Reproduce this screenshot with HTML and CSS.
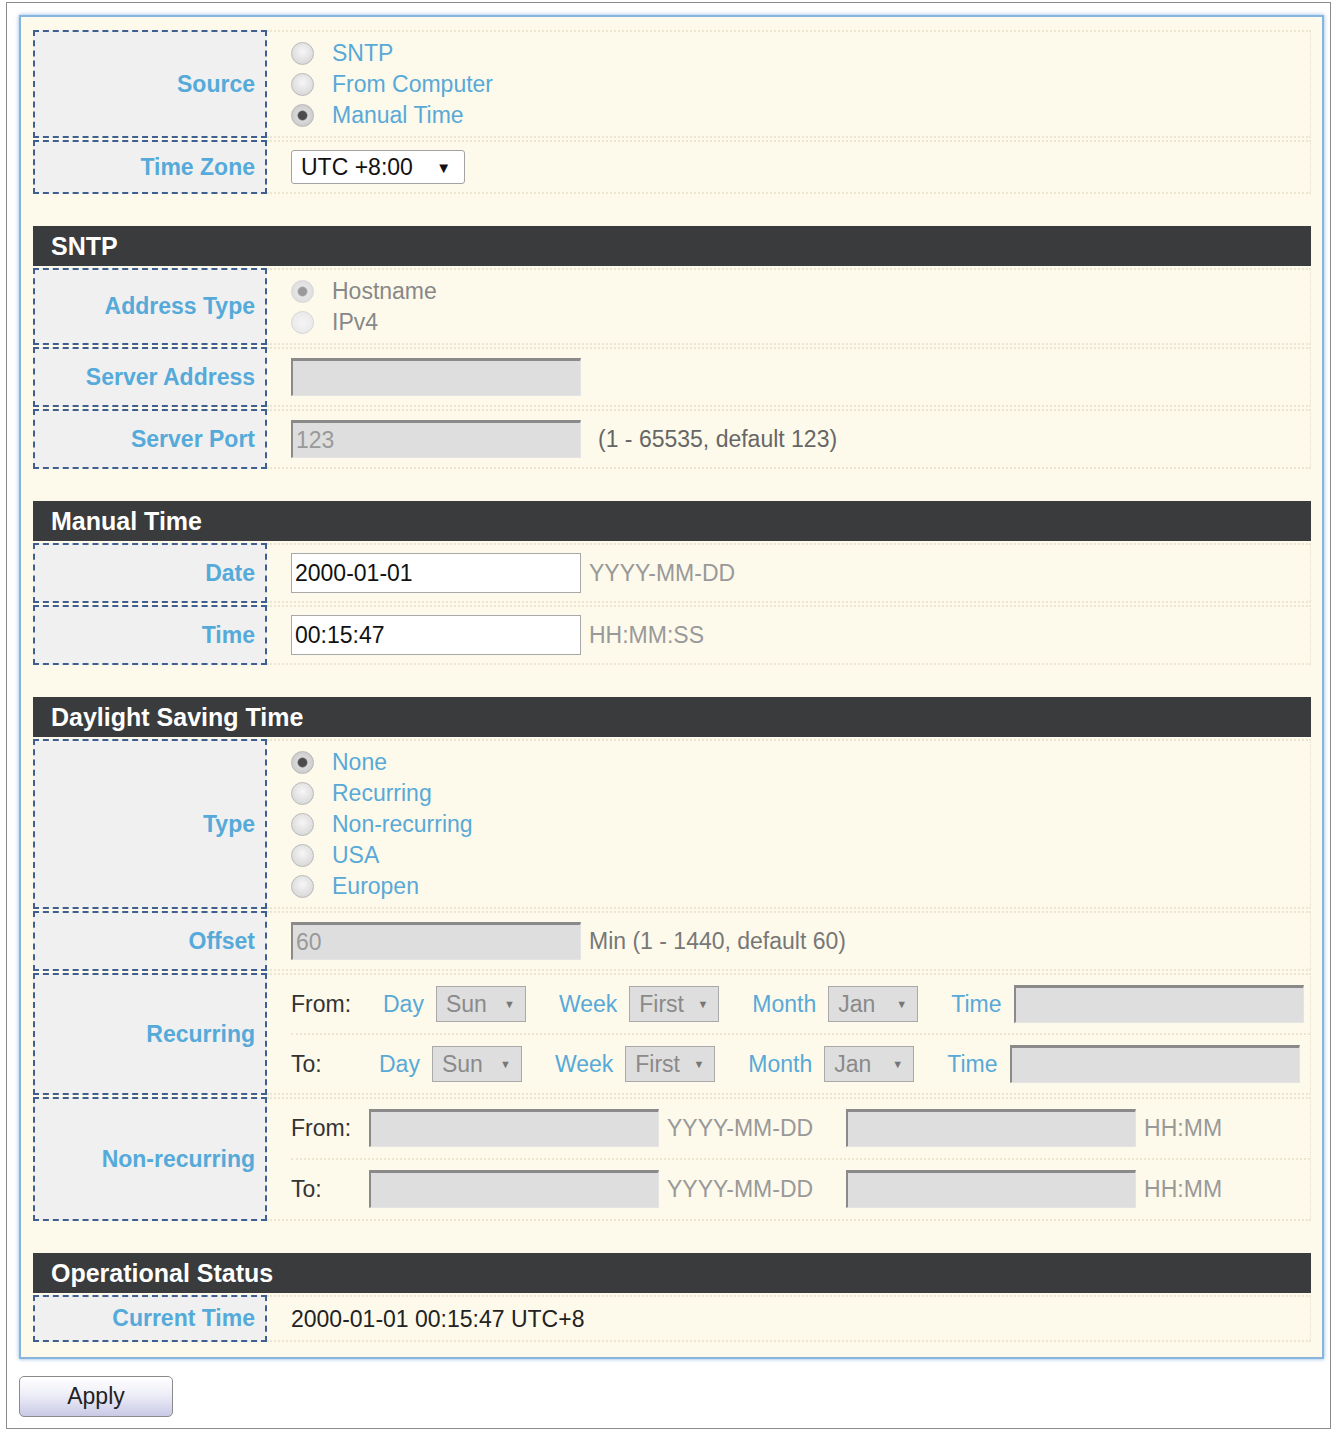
FILE: index.html
```html
<!DOCTYPE html>
<html lang="en">
<head>
    <meta charset="UTF-8">
    <meta name="viewport" content="width=device-width, initial-scale=1.0">
    <title>Time Settings</title>
    <link rel="stylesheet" href="styles.css">
</head>
<body>
  <div class="frame">
    <div class="panel">
        <!-- general -->
        <div class="section">
            <div class="row">
                <div class="label">Source</div>
                <div class="value list">
                    <label class="opt"><input type="radio" name="source"> SNTP</label>
                    <label class="opt"><input type="radio" name="source"> From Computer</label>
                    <label class="opt"><input type="radio" name="source" checked> Manual Time</label>
                </div>
            </div>
            <div class="row">
                <div class="label">Time Zone</div>
                <div class="value tz">
                    <span class="select">UTC +8:00<span class="arrow">&#9660;</span></span>
                </div>
            </div>
        </div>

        <div class="section">
            <div class="section-title">SNTP</div>
            <div class="row">
                <div class="label">Address Type</div>
                <div class="value list">
                    <label class="opt off"><input type="radio" name="addr" checked disabled> Hostname</label>
                    <label class="opt off"><input type="radio" name="addr" disabled> IPv4</label>
                </div>
            </div>
            <div class="row">
                <div class="label">Server Address</div>
                <div class="value">
                    <input type="text" class="field" disabled>
                </div>
            </div>
            <div class="row">
                <div class="label">Server Port</div>
                <div class="value">
                    <input type="text" class="field" value="123" disabled>
                    <span class="note dark wide">(1 - 65535, default 123)</span>
                </div>
            </div>
        </div>

        <div class="section">
            <div class="section-title">Manual Time</div>
            <div class="row">
                <div class="label">Date</div>
                <div class="value">
                    <input type="text" class="field on" value="2000-01-01">
                    <span class="note">YYYY-MM-DD</span>
                </div>
            </div>
            <div class="row">
                <div class="label">Time</div>
                <div class="value">
                    <input type="text" class="field on" value="00:15:47">
                    <span class="note">HH:MM:SS</span>
                </div>
            </div>
        </div>

        <div class="section">
            <div class="section-title">Daylight Saving Time</div>
            <div class="row">
                <div class="label">Type</div>
                <div class="value list tall">
                    <label class="opt"><input type="radio" name="dst" checked> None</label>
                    <label class="opt"><input type="radio" name="dst"> Recurring</label>
                    <label class="opt"><input type="radio" name="dst"> Non-recurring</label>
                    <label class="opt"><input type="radio" name="dst"> USA</label>
                    <label class="opt"><input type="radio" name="dst"> Europen</label>
                </div>
            </div>
            <div class="row">
                <div class="label">Offset</div>
                <div class="value">
                    <input type="text" class="field" value="60" disabled>
                    <span class="note mid">Min (1 - 1440, default 60)</span>
                </div>
            </div>
            <div class="row">
                <div class="label">Recurring</div>
                <div class="value multi">
                    <div class="sub">
                        <span class="tag">From:</span>
                        <span class="key">Day</span><span class="select off">Sun<span class="arrow">&#9660;</span></span>
                        <span class="key">Week</span><span class="select off">First<span class="arrow">&#9660;</span></span>
                        <span class="key">Month</span><span class="select off">Jan<span class="arrow">&#9660;</span></span>
                        <span class="key">Time</span><input type="text" class="field" disabled>
                    </div>
                    <div class="sub">
                        <span class="tag short">To:</span>
                        <span class="key">Day</span><span class="select off">Sun<span class="arrow">&#9660;</span></span>
                        <span class="key">Week</span><span class="select off">First<span class="arrow">&#9660;</span></span>
                        <span class="key">Month</span><span class="select off">Jan<span class="arrow">&#9660;</span></span>
                        <span class="key">Time</span><input type="text" class="field" disabled>
                    </div>
                </div>
            </div>
            <div class="row">
                <div class="label">Non-recurring</div>
                <div class="value multi">
                    <div class="sub loose">
                        <span class="tag narrow">From:</span>
                        <input type="text" class="field" disabled>
                        <span class="note">YYYY-MM-DD</span>
                        <input type="text" class="field push" disabled>
                        <span class="note">HH:MM</span>
                    </div>
                    <div class="sub loose">
                        <span class="tag narrow">To:</span>
                        <input type="text" class="field" disabled>
                        <span class="note">YYYY-MM-DD</span>
                        <input type="text" class="field push" disabled>
                        <span class="note">HH:MM</span>
                    </div>
                </div>
            </div>
        </div>

        <div class="section">
            <div class="section-title">Operational Status</div>
            <div class="row">
                <div class="label">Current Time</div>
                <div class="value status">2000-01-01 00:15:47 UTC+8</div>
            </div>
        </div>
    </div>
    <button class="apply">Apply</button>
  </div>
</body>
</html>
```

FILE: styles.css
```css
body {
    margin: 0;
    font-family: "Liberation Sans", Arial, sans-serif;
    font-size: 23px;
    color: #222;
    background: #fff;
}
.frame {
    box-sizing: border-box;
    width: 1325px;
    height: 1427px;
    margin: 2px 0 0 6px;
    border: 1px solid #8c8c8c;
}
.panel {
    box-sizing: border-box;
    width: 1305px;
    margin: 12px 0 0 12px;
    padding: 13px 11px 15px 12px;
    background: #fdfaeb;
    border: 2px solid #86b5df;
    box-shadow: 0 0 4px rgba(90, 150, 210, 0.7);
}
.section + .section {
    margin-top: 32px;
}
.section-title {
    height: 40px;
    line-height: 40px;
    padding-left: 18px;
    background: #3a3b3c;
    color: #fff;
    font-size: 25px;
    font-weight: bold;
}
.row {
    display: grid;
    grid-template-columns: 234px 1fr;
    margin-top: 2px;
}
.section:first-child .row:first-child {
    margin-top: 0;
}
.label {
    display: flex;
    align-items: center;
    justify-content: flex-end;
    padding-right: 10px;
    background: #f0f0f0;
    border: 2px dashed #3e5f8f;
    color: #55aad9;
    font-weight: bold;
}
.value {
    display: flex;
    align-items: center;
    padding: 9px 0 9px 24px;
    border-top: 2px dotted #ebe6d2;
    border-bottom: 2px dotted #ebe6d2;
    border-right: 1px dotted #e4dfca;
}
.value.list {
    flex-direction: column;
    align-items: flex-start;
    padding: 6px 0 5px 24px;
}
.value.list.tall {
    padding: 6px 0 5px 24px;
}
.value.tz {
    padding: 8px 0 8px 24px;
}
.value.status {
    padding: 7px 0 6px 24px;
    line-height: 30px;
    color: #222;
}
.value.multi {
    flex-direction: column;
    align-items: stretch;
    padding: 0 0 0 24px;
}

/* radio options */
.opt {
    display: flex;
    align-items: center;
    height: 31px;
    color: #58a9d7;
}
.opt.off {
    color: #888;
}
.opt input {
    appearance: none;
    width: 23px;
    height: 23px;
    margin: 0 18px 0 0;
    border: 1px solid #b9b9b9;
    border-radius: 50%;
    background: radial-gradient(circle at 50% 40%, #f6f6f6 0, #dcdcdc 70%, #cfcfcf 100%);
}
.opt input:checked {
    background: radial-gradient(circle, #4b4b4b 0, #4b4b4b 4px, #dadada 5.5px, #cccccc 11px);
}
.opt input:disabled {
    border-color: #d6d6d6;
    background: radial-gradient(circle, #f4f4f4 0, #e6e6e6 100%);
}
.opt input:disabled:checked {
    background: radial-gradient(circle, #9a9a9a 0, #9a9a9a 4px, #e6e6e6 5.5px, #dedede 11px);
}

/* drop-downs */
.select {
    box-sizing: border-box;
    display: inline-flex;
    align-items: center;
    justify-content: space-between;
    width: 174px;
    height: 34px;
    padding: 0 13px 0 9px;
    background: #fff;
    border: 1px solid #a3a3a3;
    border-radius: 3px;
    color: #111;
}
.select .arrow {
    font-size: 15px;
}
.select.off {
    width: 90px;
    height: 36px;
    padding: 0 10px 0 9px;
    border-radius: 0;
    background: #dedede;
    border-color: #a9a9a9;
    color: #8a8a8a;
}
.select.off .arrow {
    font-size: 11px;
    color: #777;
}

/* text fields */
.field {
    box-sizing: border-box;
    width: 290px;
    height: 38px;
    margin: 0;
    padding: 0 0 0 3px;
    font: inherit;
    color: #999;
    background: #dedede;
    border: none;
    border-top: 3px solid #8a8a8a;
    border-left: 2px solid #8a8a8a;
    border-right: 1px solid #e4e4e4;
    border-bottom: 1px solid #e4e4e4;
}
.field.on {
    height: 40px;
    color: #111;
    background: #fff;
    border: 1px solid #a9a9a9;
}
.value:has(.field.on) {
    padding: 8px 0 8px 24px;
}
.note {
    margin-left: 8px;
    color: #999;
}
.note.mid {
    color: #777;
}
.note.dark {
    color: #666;
}
.note.wide {
    margin-left: 17px;
}

/* recurring / non-recurring lines */
.sub {
    display: flex;
    align-items: center;
    padding: 10px 0;
}
.sub + .sub {
    border-top: 2px dotted #ebe6d2;
}
.sub.loose {
    padding: 10px 0 11px;
}
.tag {
    width: 92px;
    color: #333;
}
.tag.short {
    width: 88px;
}
.tag.narrow {
    width: 78px;
}
.key {
    margin-right: 12px;
    color: #58a9d7;
}
.select + .key {
    margin-left: 33px;
}
.key + .field {
    width: 290px;
}
.field.push {
    margin-left: 33px;
}

.apply {
    display: block;
    width: 154px;
    height: 41px;
    margin: 17px 0 0 12px;
    font: inherit;
    color: #222;
    border: 1px solid #8a8a8a;
    border-radius: 5px;
    background: linear-gradient(#ffffff, #eeeef8 45%, #c9c9e6);
    cursor: pointer;
}
```
